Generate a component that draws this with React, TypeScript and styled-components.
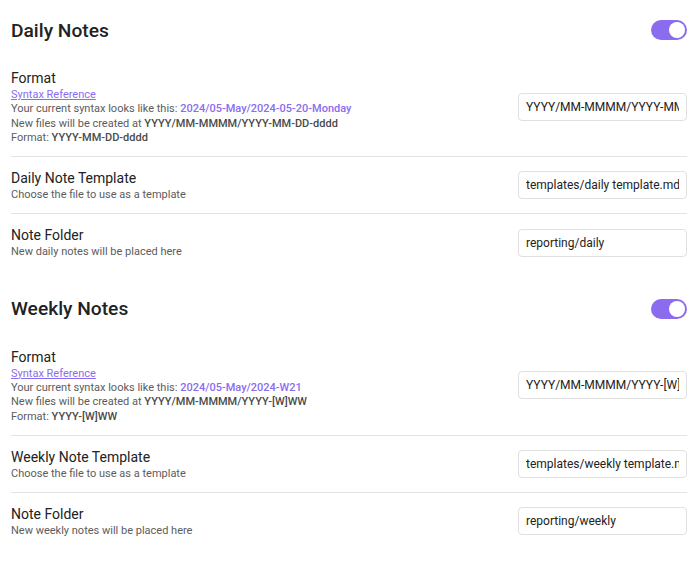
import React from "react";
import styled, { createGlobalStyle } from "styled-components";

const GlobalStyle = createGlobalStyle`
  body {
    margin: 0;
    background: #ffffff;
    font-family: Roboto, "Noto Sans", sans-serif;
    color: #222222;
  }
`;

const Page = styled.div`
  padding: 0 11px;
`;

const Section = styled.section`
  padding-top: 18px;
  & + & {
    padding-top: 26px;
  }
`;

const HeadingRow = styled.div`
  display: flex;
  align-items: center;
  justify-content: space-between;
  height: 24px;
  padding-bottom: 15px;
`;

const Heading = styled.h2`
  margin: 0;
  font-size: 19.2px;
  font-weight: 500;
  color: #222222;
`;

const Toggle = styled.div<{ on: boolean }>`
  width: 36px;
  height: 20px;
  border-radius: 10px;
  background: ${(p) => (p.on ? "#8b6cef" : "#d0d0d0")};
  display: flex;
  align-items: center;
  justify-content: ${(p) => (p.on ? "flex-end" : "flex-start")};
  padding: 0 2px;
  box-sizing: border-box;
  &::after {
    content: "";
    width: 16px;
    height: 16px;
    border-radius: 50%;
    background: #ffffff;
  }
`;

const Item = styled.div<{ first?: boolean }>`
  display: flex;
  align-items: center;
  justify-content: space-between;
  padding: 11px 0;
  border-top: ${(p) => (p.first ? "none" : "1px solid #e3e3e3")};
`;

const Info = styled.div`
  display: flex;
  flex-direction: column;
`;

const Name = styled.div`
  font-size: 14px;
  line-height: 20px;
  color: #222222;
`;

const Desc = styled.div`
  font-size: 11px;
  line-height: 14.3px;
  color: #5c5c5c;
`;

const Link = styled.a`
  color: #8b6cef;
  text-decoration: underline;
  cursor: pointer;
`;

const Accent = styled.b`
  color: #8b6cef;
  font-weight: 500;
`;

const Strong = styled.b`
  color: #4a4a4a;
  font-weight: 500;
`;

const Input = styled.input`
  width: 169px;
  height: 28px;
  box-sizing: border-box;
  border: 1px solid #e0e0e0;
  border-radius: 4px;
  padding: 0 7px;
  font-family: Roboto, "Noto Sans", sans-serif;
  font-size: 12px;
  color: #222222;
  background: #ffffff;
  outline: none;
`;

type SectionData = {
  title: string;
  sample: string;
  path: string;
  format: string;
  templateName: string;
  template: string;
  folderDesc: string;
  folder: string;
};

const sections: SectionData[] = [
  {
    title: "Daily Notes",
    sample: "2024/05-May/2024-05-20-Monday",
    path: "YYYY/MM-MMMM/YYYY-MM-DD-dddd",
    format: "YYYY-MM-DD-dddd",
    templateName: "Daily Note Template",
    template: "templates/daily template.md",
    folderDesc: "New daily notes will be placed here",
    folder: "reporting/daily",
  },
  {
    title: "Weekly Notes",
    sample: "2024/05-May/2024-W21",
    path: "YYYY/MM-MMMM/YYYY-[W]WW",
    format: "YYYY-[W]WW",
    templateName: "Weekly Note Template",
    template: "templates/weekly template.md",
    folderDesc: "New weekly notes will be placed here",
    folder: "reporting/weekly",
  },
];

const NotesSection = ({ s }: { s: SectionData }) => (
  <Section>
    <HeadingRow>
      <Heading>{s.title}</Heading>
      <Toggle on />
    </HeadingRow>
    <Item first>
      <Info>
        <Name>Format</Name>
        <Desc>
          <Link>Syntax Reference</Link>
        </Desc>
        <Desc>
          Your current syntax looks like this: <Accent>{s.sample}</Accent>
        </Desc>
        <Desc>
          New files will be created at <Strong>{s.path}</Strong>
        </Desc>
        <Desc>
          Format: <Strong>{s.format}</Strong>
        </Desc>
      </Info>
      <Input defaultValue={s.path} />
    </Item>
    <Item>
      <Info>
        <Name>{s.templateName}</Name>
        <Desc>Choose the file to use as a template</Desc>
      </Info>
      <Input defaultValue={s.template} />
    </Item>
    <Item>
      <Info>
        <Name>Note Folder</Name>
        <Desc>{s.folderDesc}</Desc>
      </Info>
      <Input defaultValue={s.folder} />
    </Item>
  </Section>
);

export default function App() {
  return (
    <>
      <GlobalStyle />
      <Page>
        {sections.map((s) => (
          <NotesSection key={s.title} s={s} />
        ))}
      </Page>
    </>
  );
}
